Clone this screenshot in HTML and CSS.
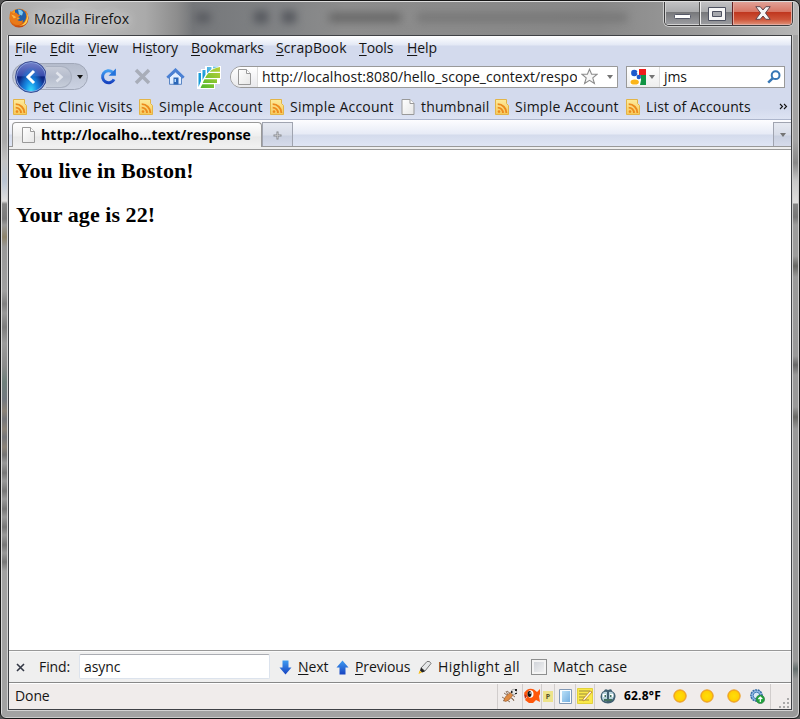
FILE: index.html
```html
<!DOCTYPE html>
<html lang="en">
<head>
<meta charset="utf-8">
<title>Mozilla Firefox</title>
<link rel="stylesheet" href="styles.css">
</head>
<body>
<svg width="0" height="0" class="defs" aria-hidden="true">
  <defs>
    <linearGradient id="gFeed" x1="0" y1="0" x2="0" y2="1"><stop offset="0" stop-color="#fdeb9c"/><stop offset="1" stop-color="#f6c95c"/></linearGradient>
    <linearGradient id="gBlue" x1="0" y1="0" x2="0" y2="1"><stop offset="0" stop-color="#3f9cf2"/><stop offset="1" stop-color="#1743c0"/></linearGradient>
    <linearGradient id="gPage" x1="0" y1="0" x2="1" y2="1"><stop offset="0" stop-color="#fff"/><stop offset="1" stop-color="#e6e6e6"/></linearGradient>
    <linearGradient id="gLeaf" x1="1" y1="0" x2="0" y2="1"><stop offset="0" stop-color="#bcd038"/><stop offset="1" stop-color="#4fb92c"/></linearGradient>
    <linearGradient id="gSky" x1="1" y1="0" x2="0" y2="1"><stop offset="0" stop-color="#8fd0ee"/><stop offset=".6" stop-color="#159bd8"/><stop offset="1" stop-color="#159bd8"/></linearGradient>
    <linearGradient id="gPane" x1="0" y1="0" x2="1" y2="1"><stop offset="0" stop-color="#b9e0f8"/><stop offset="1" stop-color="#74aee0"/></linearGradient>
    <radialGradient id="gFox" cx=".4" cy=".35" r=".7"><stop offset="0" stop-color="#ffc43c"/><stop offset=".6" stop-color="#e87712"/><stop offset="1" stop-color="#b8370b"/></radialGradient>
    <radialGradient id="gSun"><stop offset="0" stop-color="#ffde08"/><stop offset=".75" stop-color="#ffcf05"/><stop offset="1" stop-color="#f5a112"/></radialGradient>
  </defs>
  <symbol id="feed" viewBox="0 0 14 16"><path d="M.5.5h11v4l2 2v9H.5z" fill="url(#gFeed)" stroke="#e3b447"/><circle cx="4" cy="12.600" r="1.300" fill="#ec8a1c"/><path d="M2.700 8.600a5.300 5.300 0 0 1 5.300 5.300M2.700 5.200a8.700 8.700 0 0 1 8.700 8.700" fill="none" stroke="#ec8a1c" stroke-width="1.800"/></symbol>
  <symbol id="page" viewBox="0 0 13 16"><path d="M.5.5h8l4 4v11H.5z" fill="url(#gPage)" stroke="#999"/><path d="M8.500.5v4h4" fill="#fff" stroke="#999"/></symbol>
  <symbol id="sun" viewBox="0 0 14 14"><circle cx="7" cy="7" r="6.200" fill="url(#gSun)" stroke="#eba12d"/></symbol>
</svg>
<div class="window">
  <header class="titlebar">
    <svg class="fox" viewBox="0 0 20 20"><circle cx="10" cy="10" r="9.600" fill="url(#gFox)"/><path d="M6 2Q12-1 16 4q3 5-1 10-5 2-8-2 3 0 4-2-3 0-5-3z" fill="#225fa8"/><path d="M9 1.500q4 0 5 3l-1 3-3-1z" fill="#7ecbf0"/><path d="M1.500 3 4 5.400l3-.8 2 2 2.500.7-2.800 2.100Q7 11 9 12.600q3 1.200 5-.6 0 4-4.500 5Q3 17 1 11q-1-4 .5-8z" fill="#e97917"/><path d="M17 4q2 5-.5 9-2 4-6.500 4.500 8 1 9-7Q19.500 7 17 4" fill="#ffd24a"/><path d="M2.200 6.500 5 7.400l2.300 1.800-2.500 1.300" fill="#fbb849"/></svg>
    <span class="title">Mozilla Firefox</span>
    <div class="ghost" aria-hidden="true"><i class="g1"></i><i class="g2"></i><i class="g3"></i><i class="g4"></i><i class="g5"></i></div>
    <div class="controls">
      <span class="ctl min"><svg viewBox="0 0 18 6" width="18" height="6"><rect x=".5" y=".5" width="16" height="4" rx=".8" fill="#fff" stroke="#555867"/></svg></span>
      <span class="ctl max"><svg viewBox="0 0 18 14" width="18" height="14"><path d="M.5.500h17v13H.5z" fill="#f6f6f6" stroke="#4d5160"/><path d="M4.500 4.500h9v5h-9z" fill="#a5a7ac" stroke="#4d5160"/></svg></span>
      <span class="ctl close"><svg viewBox="0 0 16 14" width="16" height="14"><path d="M.8.700h4.400L8 4 10.800.7h4.400L10.500 7l4.700 6.300h-4.400L8 10l-2.800 3.300H.8L5.500 7z" fill="#f5f5f6" stroke="#5f454d"/></svg></span>
    </div>
  </header>
  <main class="client">
    <nav class="menu">
      <span class="m1"><u>F</u>ile</span><span class="m2"><u>E</u>dit</span><span class="m3"><u>V</u>iew</span><span class="m4">Hi<u>s</u>tory</span><span class="m5"><u>B</u>ookmarks</span><span class="m6"><u>S</u>crapBook</span><span class="m7"><u>T</u>ools</span><span class="m8"><u>H</u>elp</span>
    </nav>
    <div class="nav">
      <div class="backfwd">
        <span class="back"><svg viewBox="0 0 14 16" width="14" height="16"><path d="M10 2 4 8l6 6" fill="none" stroke="#fff" stroke-width="3"/></svg></span>
        <span class="fwd"><svg viewBox="0 0 12 12" width="12" height="12"><path d="m3.500 1.500 5 4.500-5 4.500" fill="none" stroke="#e2e5ed" stroke-width="2.500"/></svg></span>
        <i class="tri dark"></i>
      </div>
      <svg class="reload" viewBox="0 0 17 17"><path d="M12.500 4.200A6 6 0 1 0 14 11.300" fill="none" stroke="url(#gBlue)" stroke-width="3"/><path d="M15.900.6v7.200H8.600z" fill="#2474dc"/></svg>
      <svg class="stop" viewBox="0 0 17 17"><path d="m2 2 13 13M15 2 2 15" stroke="#a8adb9" stroke-width="3.500"/></svg>
      <svg class="home" viewBox="0 0 19 17"><path d="M3.500 9v7.300h12V9l-6-5z" fill="#e2eeff" stroke="#5a86c5"/><path d="M1.300 9.800 9.500 1.900l8.200 7.900" fill="none" stroke="#4a80d4" stroke-width="2.800"/><path d="M7.500 9.500h5v7h-5z" fill="#2b66b7"/><path d="M8.500 11h1.500v3H8.500z" fill="#b9ddff"/></svg>
      <svg class="leaf" viewBox="0 0 24 24"><path d="M0 24V7h4V4h4V1h16v13h-1v5h-5v5z" fill="#fff"/><path d="M1.500 8H4v8l-2.500 6zM5.500 5H8.500v4.500L5.500 15zM10 2h4.500v2L10 8.500zM16 1.500h6.500L16 3.500z" fill="url(#gSky)"/><path d="M23 2v4.800H12.500Q16.500 3 23 2M11.500 8H23v5H8.200q1-2.500 3.300-5M7.500 14.200H20V18H5.800q.6-2 1.700-3.800M5.400 19.200H17V23H3.500q.9-2 1.900-3.800" fill="url(#gLeaf)"/></svg>
      <div class="url">
        <span class="ident"><svg width="13" height="16"><use href="#page"/></svg></span>
        <span class="address">http://localhost:8080/hello_scope_context/response</span>
        <svg class="star" viewBox="0 0 17 17"><path d="m8.500 1.200 2.100 5h5.500l-4.300 3.700 1.600 5.600-4.900-3.200-4.900 3.200 1.600-5.600L.9 6.200h5.500z" fill="#f7f7f7" stroke="#8c8c8c" stroke-width="1.100"/></svg>
        <i class="tri"></i>
      </div>
      <div class="search">
        <span class="engine"><svg viewBox="0 0 16 16" width="16" height="16"><path d="M9 0h7v6H9z" fill="#ee1c1c"/><path d="M9 6h7v10H9z" fill="#109444"/><path d="M0 0h8l1 6 2 1v4l-1 5H0z" fill="#fff"/><circle cx="4.300" cy="4" r="3.200" fill="#1d59cd"/><circle cx="8.800" cy="8" r="2.200" fill="#1d59cd"/><ellipse cx="4.700" cy="13" rx="4.200" ry="2.600" fill="#fbb51a"/><path d="m6.500 0 2 2-2 2 2.500 1V0z" fill="#fff"/></svg><i class="tri"></i></span>
        <span class="query">jms</span>
        <svg class="lens" viewBox="0 0 14 14"><circle cx="8.600" cy="5.200" r="3.900" fill="#fff" stroke="#3777b5" stroke-width="2"/><path d="M5.600 8.300 1.200 12.700" stroke="#3777b5" stroke-width="2.500"/></svg>
      </div>
    </div>
    <div class="bookmarks">
      <span class="bm b1"><svg><use href="#feed"/></svg><b>Pet Clinic Visits</b></span>
      <span class="bm b2"><svg><use href="#feed"/></svg><b>Simple Account</b></span>
      <span class="bm b3"><svg><use href="#feed"/></svg><b>Simple Account</b></span>
      <span class="bm b4"><svg><use href="#page"/></svg><b>thumbnail</b></span>
      <span class="bm b5"><svg><use href="#feed"/></svg><b>Simple Account</b></span>
      <span class="bm b6"><svg><use href="#feed"/></svg><b>List of Accounts</b></span>
      <svg class="more" viewBox="0 0 9 7"><path d="m1 1 2.500 2.500L1 6M5 1l2.500 2.500L5 6" fill="none" stroke="#111" stroke-width="1.100"/></svg>
    </div>
    <div class="tabs">
      <div class="tab"><svg width="13" height="16"><use href="#page"/></svg><span>http://localho...text/response</span></div>
      <div class="newtab"><svg viewBox="0 0 9 9" width="9" height="9"><path d="M4.500.5v8M.5 4.500h8" stroke="#85878c" stroke-width="2"/><path d="M4.500 1.500v6M1.500 4.500h6" stroke="#c5c6c9" stroke-width=".8"/></svg></div>
      <div class="alltabs"><i class="tri"></i></div>
    </div>
    <div class="tabedge"></div>
    <article class="page">
      <h2>You live in Boston!</h2>
      <h2>Your age is 22!</h2>
    </article>
    <div class="find">
      <svg class="x" viewBox="0 0 9 9"><path d="m1 1 7 7M8 1 1 8" stroke="#333845" stroke-width="1.600"/></svg>
      <span class="flabel">Find:</span>
      <span class="field">async</span>
      <svg class="arrow down" viewBox="0 0 13 15"><path d="M3.500.5h6v7h3l-6 7-6-7h3z" fill="url(#gBlue)"/></svg>
      <span class="fnext"><u>N</u>ext</span>
      <svg class="arrow" viewBox="0 0 13 15"><path d="M3.500 14.500h6v-7h3l-6-7-6 7h3z" fill="url(#gBlue)"/></svg>
      <span class="fprev"><u>P</u>revious</span>
      <svg class="marker" viewBox="0 0 14 15"><path d="m3 8 6-6.500q3-1 4 2L7 11z" fill="#e5e7e8" stroke="#777"/><path d="m3 7.500 4 4-3 1-2-2z" fill="#222"/><path d="m1.500 10.500 2.500 2L.5 14z" fill="#f8bd16"/></svg>
      <span class="fhigh">Highlight <u>a</u>ll</span>
      <span class="check"></span>
      <span class="fcase">Mat<u>c</u>h case</span>
    </div>
    <footer class="status">
      <span class="done">Done</span>
      <span class="cell c1"><svg viewBox="0 0 16 16" width="16" height="16"><path d="m2 5 10 7M0 9l8 5M5 3l8 6M1 13l5-3M6 7 4 3M10 10l2 3" stroke="#8c715d" stroke-width="1"/><ellipse cx="6.500" cy="9" rx="5.800" ry="2.300" transform="rotate(-45 6.500 9)" fill="#df8b43" stroke="#9b6138" stroke-width=".7"/><circle cx="12" cy="4" r="2.800" fill="#e3e4e4" stroke="#777" stroke-width=".5"/><path d="M13 1h2v2h-2zM13 5h2v1h-2zM9 3h1.500v2H9z" fill="#222"/></svg></span>
      <span class="cell c2"><svg viewBox="0 0 17 16" width="17" height="16"><path d="M0 5Q4-1 10 1.500L13 4l3-3v5l-1 2 1 6-4-2-3 3H5l-4-3 2-3-2-2z" fill="#ff570b"/><path d="m0 6 3 2-2 3z" fill="#c5260b"/><ellipse cx="6.500" cy="6" rx="3" ry="3.800" fill="#fff"/><ellipse cx="5.500" cy="6" rx="2" ry="3" fill="#111"/><circle cx="6.200" cy="5" r=".8" fill="#fff"/></svg></span>
      <span class="cell c3"><b>P</b></span>
      <span class="cell c4"><svg viewBox="0 0 13 15" width="13" height="15"><path d="M.5.500h12v14H.5z" fill="#f9fcff" stroke="#8198b5"/><path d="M3 2h8v11H3z" fill="url(#gPane)"/></svg></span>
      <span class="cell c5"><svg viewBox="0 0 16 16" width="16" height="16"><path d="M.5.500h15v15H.5z" fill="#fae94a" stroke="#e2d13a"/><path d="M2 3h11M2 6h8M2 9h6M2 12h10" stroke="#9a8b3a"/><path d="m6 11 7-8 2 1-7 8-2 1z" fill="#fff7df" stroke="#b98321" stroke-width=".8"/></svg></span>
      <span class="cell c6"><svg viewBox="0 0 16 16" width="16" height="16"><path d="M4 3Q5 0 8 2q4-2 4 1 4 2 3.500 6-1 6-7.500 6.500Q1 15 .5 9 1 4 4 3" fill="#416071"/><path d="M2 6q2-3 5-2v9Q3 14 2 10zM9 4q4-1 5 3 0 5-5 6z" fill="#b9d4dd"/><path d="M3 6h3v3H3zM10 6h3v3h-3z" fill="#fff"/><path d="M4.500 7H6v2H4.500zM10 7h1.500v2H10zM4 11h8v2H4z" fill="#43725f"/></svg></span>
      <span class="temp">62.8°F</span>
      <svg class="sun s1"><use href="#sun"/></svg><svg class="sun s2"><use href="#sun"/></svg><svg class="sun s3"><use href="#sun"/></svg>
      <svg class="gear" viewBox="0 0 15 15"><circle cx="6.500" cy="6.500" r="5.600" fill="#8fb9e6" stroke="#396fa7" stroke-width="1.500" stroke-dasharray="2 .7"/><circle cx="6.500" cy="6.500" r="3.300" fill="#dceaf8" stroke="#467fb8"/><circle cx="10.300" cy="10.300" r="4.300" fill="#20a33c" stroke="#2b6f45" stroke-width=".6"/><path d="M10.300 8v5M8.300 10l2-2 2 2" fill="none" stroke="#fff" stroke-width="1.200"/></svg>
      <span class="grip"><svg viewBox="0 0 12 12" width="12" height="12"><path d="M9 1h2v2H9zM5 5h2v2H5zM9 5h2v2H9zM1 9h2v2H1zM5 9h2v2H5zM9 9h2v2H9z" fill="#aaa9a9"/></svg></span>
    </footer>
  </main>
</div>
</body>
</html>
```

FILE: styles.css
```css
* { box-sizing: border-box; }
html, body { margin: 0; background: #555; }
body { width: 800px; height: 719px; overflow: hidden; font: 14px/20px "Open Sans", "Noto Sans", sans-serif; color: #151515; letter-spacing: -0.1px; }
svg { flex: none; display: block; }
.defs { position: absolute; }
i { display: block; }
u { text-underline-offset: 2px; text-decoration-thickness: 1px; }
span { white-space: nowrap; flex: none; }

.window {
  width: 800px; height: 719px; padding: 0 7px 6px; border: 1px solid #161616; border-radius: 7px 7px 6px 6px;
  box-shadow: inset 1px 1px #d9d9d9, inset -1px -1px #ccc;
  background:
    linear-gradient(#aaa 0 140px, #c3c3c3 160px, #b9c4d2 180px, #e0dfde 200px, #858585 203px, #7a7a7a 218px, #999 224px, #8e846b 236px, #999 246px, #a0a0a0 290px, #808080 303px, #999 312px, #7d7d7d 326px, #9c9c9c 342px, #8b8b8b 365px, #6f807b 381px, #72787f 398px, #8b8378 410px, #75767a 418px, #8b8378 428px, #75767a 436px, #8b8378 446px, #747474 454px, #999 462px, #777 472px, #999 480px, #777 490px, #999 498px, #777 508px, #999 516px, #777 526px, #999 534px, #777 544px, #999 552px, #777 561px, #a2a2a2 570px) left / 50% 100% no-repeat,
    linear-gradient(#a3a3a3 0 140px, #888 162px, #c8c8c8 180px, #e0dfde 202px, #858585 203px, #777 216px, #9c9c9c 224px, #9c9c9c 255px, #676764 265px, #9a9a9a 276px, #999 355px, #686868 364px, #999 374px, #999 406px, #696966 416px, #999 428px, #999 660px, #66706f 668px, #999 678px) right / 50% 100% no-repeat;
}
.titlebar { position: relative; height: 34px; display: flex; margin: 0 -6px; padding: 8px 6px 0 7px; overflow: hidden; background: linear-gradient(90deg, #aaa, #bcbcbc 9%, #aaa 18%, #8d8d8d 22%, #75777a 24%, #818385 35%, #8d8d8d 43%, #888 75%, #9b9b9b 88%, #b6b6b6); border-top: 1px solid #ddd; border-radius: 6px 6px 0 0; }
.fox { width: 20px; height: 20px; margin-top: -2px; position: relative; z-index: 1; }
.title { margin: -1px 0 0 5px; letter-spacing: .05px; position: relative; z-index: 1; text-shadow: 0 0 8px #ddd, 0 0 12px #ddd; }
.ghost { position: absolute; inset: 0; filter: blur(4px); }
.ghost i { position: absolute; height: 9px; top: 11px; background: #55575d; }
.ghost .g1 { left: 194px; width: 14px; }
.ghost .g2 { left: 252px; width: 14px; height: 12px; top: 9px; }
.ghost .g3 { left: 280px; width: 14px; height: 12px; top: 9px; }
.ghost .g4 { left: 327px; width: 72px; background: #666; }
.ghost .g5 { left: 415px; width: 210px; background: #777; }
.controls { position: absolute; top: -1px; right: 5px; display: flex; width: 129px; height: 25px; border: 1px solid #3c3c3e; border-top: 0; border-radius: 0 0 5px 5px; box-shadow: 0 0 0 1px #ccc; overflow: hidden; }
.ctl { display: flex; align-items: center; justify-content: center; border: 1px solid #d2d2d2; border-top: 0; background: linear-gradient(#c4c4c6, #aaabad 47%, #77787b 50%, #9a9b9f); }
.min { width: 35px; padding-top: 8px; }
.max { width: 33px; border-left-color: #eee; box-shadow: -1px 0 #555; padding-top: 2px; }
.close { width: 59px; border-color: #e3aaa0; box-shadow: -1px 0 #622; background: linear-gradient(#e1a59b, #d77665 47%, #c0371f 50%, #ce5439 80%, #dd896f); }

.client { height: 675px; width: 784px; border: 1px solid #3f4145; background: #fff; display: flex; flex-direction: column; outline: 1px solid #d2d2d2; }
.menu { height: 24px; display: flex; padding: 2px 0 0 6px; background: linear-gradient(#fff, #f2f5fb 4px, #e3e8f5 9px, #d3daed 10px); }
.m1 { width: 35px; } .m2 { width: 38px; } .m3 { width: 44px; } .m4 { width: 59px; } .m5 { width: 85px; } .m6 { width: 83px; letter-spacing: .1px; } .m7 { width: 48px; }

.nav { height: 33px; display: flex; align-items: center; padding: 0 6px 0 3px; background: #d3daed; }
.backfwd { width: 76px; height: 27px; border: 1px solid #a1a8b9; border-radius: 15px; display: flex; align-items: center; background: linear-gradient(#b5bccc, #cbd2e2); }
.back { width: 32px; height: 32px; margin: -3px 0 -3px 2px; border-radius: 50%; border: 1px solid #3b4b91; box-shadow: inset 0 0 0 1px #8ca4df; display: flex; align-items: center; justify-content: center; background: radial-gradient(ellipse at 50% 100%, #3ae5ff 0, #168be4 28%, transparent 60%), linear-gradient(#7582ca, #3a4dae 45%, #0d237f 50%, #1b5cc2); }
.fwd { width: 26px; height: 22px; margin-left: -1px; border: 1px solid #aab1c1; border-left: 0; border-radius: 0 11px 11px 0; display: flex; align-items: center; justify-content: center; background: linear-gradient(#c7ccd8, #b6bdcd 50%, #c7ceda); }
.tri { border: 3px solid transparent; border-top: 4px solid #747474; border-bottom: 0; width: 6px; height: 4px; flex: none; }
.dark { border-top-color: #111; margin-left: 5px; }
.reload { width: 17px; height: 17px; margin-left: 12px; }
.stop { width: 17px; height: 17px; margin-left: 17px; }
.home { width: 19px; height: 17px; margin-left: 15px; }
.leaf { width: 24px; height: 24px; margin-left: 12px; }
.url { width: 388px; height: 22px; margin-left: 9px; border: 1px solid #999; border-radius: 11px 0 0 11px; background: #fff; display: flex; align-items: center; overflow: hidden; }
.ident { width: 27px; height: 20px; padding: 2px 0 0 7px; border-right: 1px solid #ddd; background: linear-gradient(#fff, #e9e9ec); }
.address { width: 315px; margin: 0 6px 0 4px; overflow: hidden; letter-spacing: .03px; }
.star { width: 17px; height: 17px; margin-left: -2px; }
.url > .tri { margin-left: 9px; }
.search { width: 159px; height: 22px; margin-left: 8px; border: 1px solid #999; background: #fff; display: flex; align-items: center; }
.engine { width: 33px; height: 20px; padding-left: 3px; border-right: 1px solid #ddd; display: flex; align-items: center; gap: 3px; background: linear-gradient(#fff, #eee); }
.query { width: 103px; margin-left: 4px; }
.lens { width: 14px; height: 14px; }

.bookmarks { height: 27px; display: flex; align-items: center; padding: 1px 3px 0 5px; border-bottom: 1px solid #adb6cd; background: linear-gradient(#d3daed 60%, #dde3f3); }
.bm { display: flex; align-items: center; letter-spacing: .15px; }
.bm b { font-weight: 400; margin-left: 6px; }
.bm svg { width: 14px; height: 16px; margin-left: -1px; }
.b1 { width: 126px; } .b2, .b3 { width: 131px; } .b4 { width: 94px; } .b5 { width: 131px; } .b6 { width: 151px; }
.b2, .b3, .b5 { letter-spacing: .23px; }
.more { width: 9px; height: 7px; margin-left: 1px; }

.tabs { height: 27px; display: flex; align-items: flex-end; padding-left: 3px; border-bottom: 1px solid #999; background: linear-gradient(#fdfdff, #e7ebf6 14px, #d4dbec 15px, #dfe5f4); }
.tab { width: 250px; height: 25px; border: 1px solid #999; border-bottom: 0; border-radius: 4px 4px 0 0; margin-bottom: -1px; padding-left: 9px; display: flex; align-items: center; background: linear-gradient(#fff, #eee 13px, #e8e8e8 14px, #f1f1f1); }
.tab span { font: 700 14px/20px "Open Sans", sans-serif; margin-left: 6px; letter-spacing: .12px; color: #000; }
.newtab { width: 31px; height: 24px; border: 1px solid #a0a4b0; border-bottom: 0; display: flex; align-items: center; justify-content: center; padding-top: 2px; background: linear-gradient(#e6e9f1, #d7dce8 12px, #c9d0e0 13px, #d6dbea); }
.alltabs { width: 18px; height: 24px; margin-left: auto; border: 1px solid #a0a4b0; border-width: 1px 0 0 1px; display: flex; align-items: center; justify-content: center; padding-top: 1px; background: linear-gradient(#e6e9f1, #d7dce8 12px, #c9d0e0 13px, #d6dbea); }
.tabedge { height: 3px; background: #efefef; border-bottom: 1px solid #999; }

.page { height: 500px; padding: 8px 7px; background: #fff; }
.page h2 { margin: 0 0 19px; font: 700 22px/25px "Liberation Serif", serif; letter-spacing: .05px; color: #000; }

.find { height: 32px; border-top: 1px solid #999; background: #efefef; display: flex; align-items: center; padding: 1px 0 0 7px; box-shadow: inset 0 1px #fafafa; }
.x { width: 9px; height: 9px; }
.flabel { width: 40px; margin-left: 14px; }
.field { width: 191px; height: 25px; line-height: 23px; padding-left: 4px; border: 1px solid #dce3ed; border-top-color: #abadb3; border-radius: 2px; background: #fff; margin-top: -1px; }
.arrow { width: 13px; height: 15px; }
.down { margin-left: 9px; }
.fnext { width: 33px; margin: 0 5px 0 6px; }
.fprev { width: 56px; margin: 0 7px 0 6px; }
.marker { width: 14px; height: 15px; }
.fhigh { width: 82px; margin-left: 6px; letter-spacing: .4px; }
.check { width: 16px; height: 16px; margin-left: 11px; border: 1px solid #8e8f8f; background: linear-gradient(135deg, #cbcfd5, #f6f6f6); box-shadow: inset 0 0 0 2px #f4f4f4; }
.fcase { margin-left: 6px; letter-spacing: .1px; }

.status { height: 27px; border-top: 1px solid #888; background: #f0eceb; display: flex; align-items: center; padding-left: 6px; box-shadow: inset 0 1px #fff; }
.done { width: 482px; }
.cell { height: 25px; border-left: 1px solid #d1cdcc; display: flex; align-items: center; justify-content: center; }
.c1 { width: 25px; } .c2 { width: 19px; } .c3 { width: 13px; } .c4 { width: 21px; } .c5 { width: 19px; } .c6 { width: 26px; }
.c3 b { width: 10px; height: 11px; background: #eee389; font: 700 7px/11px "Open Sans", sans-serif; text-align: center; color: #55502b; }
.temp { width: 38px; margin-left: 4px; font: 700 12px/20px "Open Sans", sans-serif; letter-spacing: .2px; color: #000; }
.sun { width: 14px; height: 14px; margin-top: -1px; }
.s1 { margin-left: 11px; } .s2, .s3 { margin-left: 13px; }
.gear { width: 15px; height: 15px; margin-left: 9px; margin-top: 1px; }
.grip { height: 25px; margin-left: 5px; padding: 13px 0 0 7px; border-left: 1px solid #d1cdcc; }
```
